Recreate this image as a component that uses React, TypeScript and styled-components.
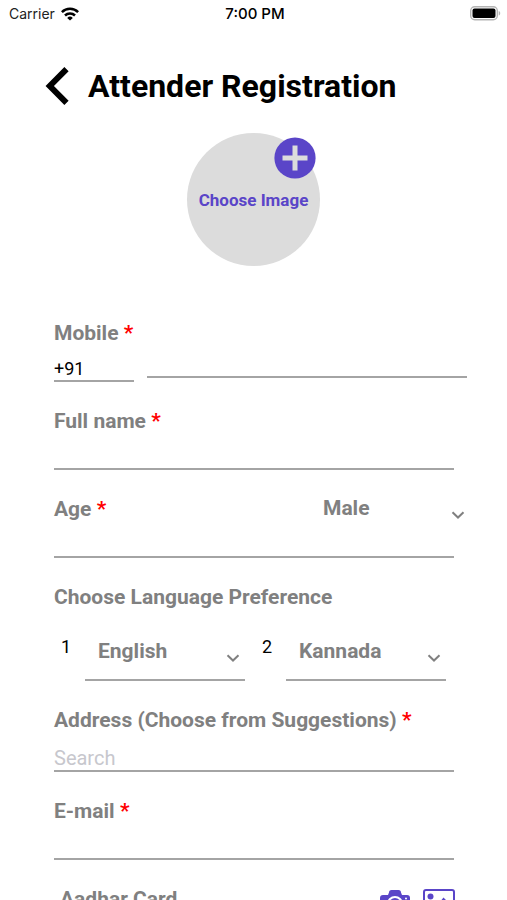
import React from "react";
import styled, { createGlobalStyle } from "styled-components";

const purple = "#5a45c8";
const grey = "#808080";
const line = "#a4a4a4";

const GlobalStyle = createGlobalStyle`
  *, *::before, *::after { box-sizing: border-box; }
  body { margin: 0; background: #fff; }
  input, select, button { font: inherit; color: inherit; }
`;

const Screen = styled.div`
  height: 100vh;
  display: flex;
  flex-direction: column;
  overflow: hidden;
  background: #fff;
  color: #000;
  font-family: Roboto, "Liberation Sans", sans-serif;
`;

const StatusBar = styled.div`
  display: grid;
  grid-template-columns: 1fr auto 1fr;
  align-items: center;
  flex: none;
  height: 27px;
  padding: 0 6px 0 9px;
  font-family: Inter, sans-serif;
  font-size: 14px;
`;

const Carrier = styled.span`
  display: flex;
  align-items: center;
  gap: 6px;
  color: #222;
`;

const Clock = styled.span`
  font-size: 15px;
  font-weight: 500;
`;

const Battery = styled.svg`
  justify-self: end;
`;

const Scroller = styled.main`
  flex: 1;
  min-height: 0;
  overflow-y: auto;
  scrollbar-width: none;
`;

const Header = styled.header`
  display: flex;
  align-items: center;
  gap: 18px;
  height: 40px;
  margin-top: 39px;
  padding: 0 45px;
`;

const BackButton = styled.button`
  display: flex;
  padding: 0;
  border: 0;
  background: none;
  cursor: pointer;
`;

const Title = styled.h1`
  margin: 0;
  font-size: 32px;
  line-height: 40px;
  font-weight: 700;
  white-space: nowrap;
`;

const ImagePicker = styled.button`
  position: relative;
  display: block;
  width: 133px;
  height: 133px;
  margin: 27px auto 0;
  padding: 0;
  border: 0;
  border-radius: 50%;
  background: #dcdcdc;
  && { color: ${purple}; font-size: 17px; font-weight: 700; }
  white-space: nowrap;
  cursor: pointer;
`;

const PlusBadge = styled.svg`
  position: absolute;
  top: 4px;
  right: 4px;
`;

const Form = styled.form`
  display: flex;
  flex-direction: column;
  gap: 26px;
  padding: 54px 53px 40px 54px;
`;

const Field = styled.div`
  display: flex;
  flex-direction: column;
`;

const LabelRow = styled.div`
  display: flex;
  justify-content: space-between;
`;

const Label = styled.label`
  color: ${grey};
  font-size: 21px;
  line-height: 26px;
  font-weight: 700;
  white-space: nowrap;
`;

const Star = styled.span`
  color: #f00;
`;

const TextInput = styled.input`
  width: 100%;
  min-width: 0;
  height: 36px;
  padding: 10px 0 0;
  border: 0;
  border-bottom: 2px solid ${line};
  border-radius: 0;
  outline: 0;
  background: transparent;
  && { font-size: 20px; }
  &::placeholder { color: #c7c7cd; opacity: 1; }
`;

const SearchInput = styled(TextInput)`
  height: 39px;
  padding-top: 13px;
`;

const PhoneRow = styled.div`
  display: grid;
  grid-template-columns: 80px 1fr;
  align-items: start;
  gap: 13px;
  margin-right: -13px;
`;

const CodeInput = styled(TextInput)`
  && { font-size: 18px; }
`;

const NumberInput = styled(TextInput)`
  height: 32px;
`;

const SelectBox = styled.div<{ $underlined?: boolean }>`
  display: grid;
  flex: 1;
  min-width: 0;
  ${(p) => p.$underlined && `border-bottom: 2px solid ${line};`}

  > * { grid-area: 1 / 1; }
  > svg {
    align-self: center;
    justify-self: end;
    margin: 14px 5px 0 0;
    pointer-events: none;
  }
`;

const Select = styled.select`
  appearance: none;
  width: 100%;
  padding: 0 24px 0 13px;
  border: 0;
  outline: 0;
  background: transparent;
  && { color: ${grey}; font-size: 21px; font-weight: 700; }
`;

const GenderSlot = styled.div`
  display: flex;
  width: 160px;
  height: 24px;
  margin-right: -16px;
`;

const Languages = styled.div`
  display: grid;
  grid-template-columns: 1fr 1fr;
  gap: 17px;
  padding: 12px 8px 0 7px;
`;

const Language = styled.div`
  display: flex;
  height: 59px;
  > label { width: 24px; padding-top: 14px; font-size: 18px; line-height: 22px; }
`;

const Uploads = styled.div`
  display: flex;
  align-items: flex-start;
  justify-content: space-between;
  margin: 0 -1px 0 6px;
`;

const UploadActions = styled.div`
  display: flex;
  align-items: center;
  gap: 13px;
  padding-top: 3px;
`;

const IconButton = styled.button`
  display: flex;
  padding: 0;
  border: 0;
  background: none;
  cursor: pointer;
`;

const Chevron = () => (
  <svg width="14" height="8" viewBox="0 0 14 8" fill="none" stroke={grey} strokeWidth="2" aria-hidden="true">
    <path d="M1.500 1.200 7 6.500l5.500-5.300" />
  </svg>
);

type DropdownProps = { id: string; label?: string; options: string[]; underlined?: boolean };

const Dropdown = ({ id, label, options, underlined }: DropdownProps) => (
  <SelectBox $underlined={underlined}>
    <Select id={id} aria-label={label}>
      {options.map((o) => (
        <option key={o}>{o}</option>
      ))}
    </Select>
    <Chevron />
  </SelectBox>
);

const Required = ({ id, children }: { id: string; children: React.ReactNode }) => (
  <Label htmlFor={id}>
    {children} <Star>*</Star>
  </Label>
);

export default function App() {
  return (
    <Screen>
      <GlobalStyle />
      <StatusBar>
        <Carrier>
          Carrier
          <svg width="18" height="14" viewBox="0 0 18 14" fill="none" stroke="#000" strokeWidth="2.500" aria-hidden="true">
            <path d="M.9 5.200a11.500 11.500 0 0 1 16.200 0M4 8.500a7.100 7.100 0 0 1 10 0" />
            <path d="M9 13.600 6.200 10.900a4 4 0 0 1 5.600 0z" fill="#000" stroke="none" />
          </svg>
        </Carrier>
        <Clock>7:00 PM</Clock>
        <Battery width="31" height="15" viewBox="0 0 31 15" aria-label="Battery full">
          <rect x=".7" y=".7" width="26.600" height="13" rx="4" fill="#fff" stroke="#b4b4b4" strokeWidth="1.400" />
          <rect x="2.500" y="2.500" width="23" height="9.500" rx="2" />
          <path d="M28.700 5c2 .6 2 4 0 4.600z" fill="#b4b4b4" />
        </Battery>
      </StatusBar>
      <Scroller>
        <Header>
          <BackButton type="button" aria-label="Back">
            <svg width="25" height="38" viewBox="0 0 25 38" fill="none" stroke="#000" strokeWidth="6">
              <path d="M21.500 2.200 4.800 19l16.700 16.800" />
            </svg>
          </BackButton>
          <Title>Attender Registration</Title>
        </Header>
        <ImagePicker type="button">
          Choose Image
          <PlusBadge width="42" height="42" viewBox="0 0 42 42" aria-hidden="true">
            <circle cx="21" cy="21" r="20.600" fill={purple} />
            <path d="M21 8.500v25M8.500 21h25" stroke="#dcdcdc" strokeWidth="5" />
          </PlusBadge>
        </ImagePicker>
        <Form>
          <Field>
            <Required id="mobile">Mobile</Required>
            <PhoneRow>
              <CodeInput aria-label="Country code" defaultValue="+91" />
              <NumberInput id="mobile" type="tel" />
            </PhoneRow>
          </Field>
          <Field>
            <Required id="name">Full name</Required>
            <TextInput id="name" />
          </Field>
          <Field>
            <LabelRow>
              <Required id="age">Age</Required>
              <GenderSlot>
                <Dropdown id="gender" label="Gender" options={["Male", "Female", "Other"]} />
              </GenderSlot>
            </LabelRow>
            <TextInput id="age" inputMode="numeric" />
          </Field>
          <Field>
            <Label as="span">Choose Language Preference</Label>
            <Languages>
              <Language>
                <label htmlFor="lang1">1</label>
                <Dropdown id="lang1" options={["English", "Kannada", "Hindi"]} underlined />
              </Language>
              <Language>
                <label htmlFor="lang2">2</label>
                <Dropdown id="lang2" options={["Kannada", "English", "Hindi"]} underlined />
              </Language>
            </Languages>
          </Field>
          <Field>
            <Required id="address">Address (Choose from Suggestions)</Required>
            <SearchInput id="address" placeholder="Search" />
          </Field>
          <Field>
            <Required id="email">E-mail</Required>
            <TextInput id="email" type="email" />
          </Field>
          <Uploads>
            <Label as="span">Aadhar Card</Label>
            <UploadActions>
              <IconButton type="button" aria-label="Take photo">
                <svg width="30" height="26" viewBox="0 0 30 26">
                  <path fill={purple} fillRule="evenodd" d="M9 2.500A2.500 2.500 0 0 1 11.500 0h7A2.500 2.500 0 0 1 21 2.500l1 2.500h5a3 3 0 0 1 3 3v15a3 3 0 0 1-3 3H3a3 3 0 0 1-3-3V8a3 3 0 0 1 3-3h5zM15 6a8 8 0 1 0 0 16 8 8 0 0 0 0-16z" />
                  <circle cx="15" cy="14" r="6" fill={purple} />
                  <circle cx="26" cy="8.500" r="1" fill="#fff" />
                </svg>
              </IconButton>
              <IconButton type="button" aria-label="Choose from gallery">
                <svg width="32" height="28" viewBox="0 0 32 28" fill={purple}>
                  <rect x="1" y="1" width="30" height="26" rx="2" fill="none" stroke={purple} strokeWidth="2" />
                  <circle cx="7.500" cy="7.500" r="3" />
                  <path d="M4 24v-5l4-4 4 4 8.500-10.500L28 16v8z" />
                </svg>
              </IconButton>
            </UploadActions>
          </Uploads>
        </Form>
      </Scroller>
    </Screen>
  );
}
